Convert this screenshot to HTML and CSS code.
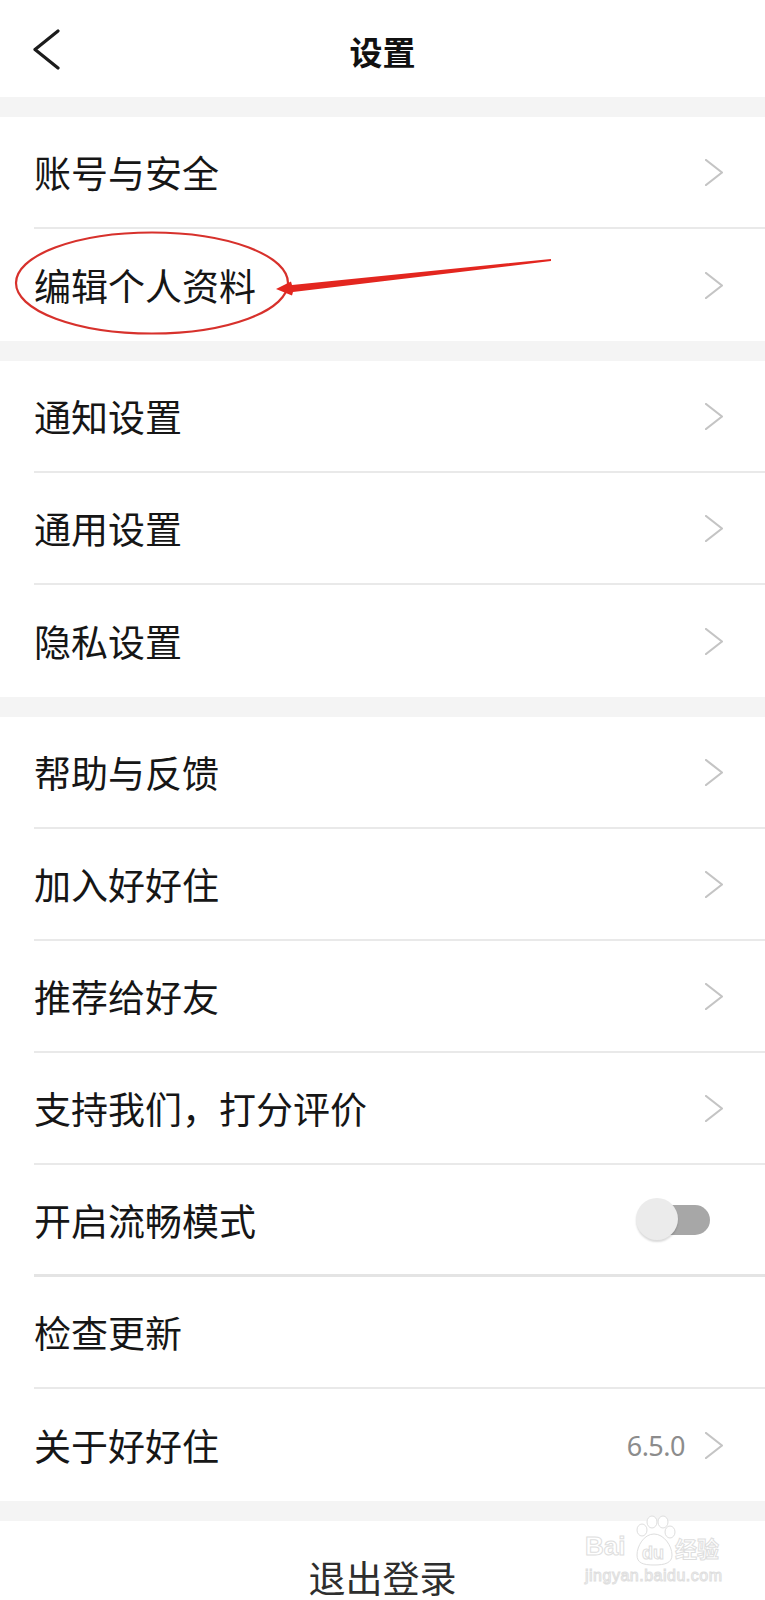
FILE: index.html
```html
<!DOCTYPE html>
<html lang="zh-CN">
<head>
  <meta charset="UTF-8">
  <meta name="viewport" content="width=device-width, initial-scale=1.0">
  <title>设置</title>
  <link rel="stylesheet" href="styles.css">
</head>
<body>
  <div class="page">
    <!-- top bar -->
    <header class="topbar">
      <a class="back" href="#">
        <svg width="28" height="41" viewBox="0 0 28 41"><polyline points="25,2 2,20.5 25,39" /></svg>
      </a>
      <h1>设置</h1>
      <span></span>
    </header>

    <section class="group">
      <div class="row"><span class="label">账号与安全</span><svg class="arrow" viewBox="0 0 18 27"><polyline points="1,1 17,13.5 1,26" /></svg></div>
      <div class="row"><span class="label">编辑个人资料</span><svg class="arrow" viewBox="0 0 18 27"><polyline points="1,1 17,13.5 1,26" /></svg></div>
    </section>

    <section class="group">
      <div class="row"><span class="label">通知设置</span><svg class="arrow" viewBox="0 0 18 27"><polyline points="1,1 17,13.5 1,26" /></svg></div>
      <div class="row"><span class="label">通用设置</span><svg class="arrow" viewBox="0 0 18 27"><polyline points="1,1 17,13.5 1,26" /></svg></div>
      <div class="row"><span class="label">隐私设置</span><svg class="arrow" viewBox="0 0 18 27"><polyline points="1,1 17,13.5 1,26" /></svg></div>
    </section>

    <section class="group">
      <div class="row"><span class="label">帮助与反馈</span><svg class="arrow" viewBox="0 0 18 27"><polyline points="1,1 17,13.5 1,26" /></svg></div>
      <div class="row"><span class="label">加入好好住</span><svg class="arrow" viewBox="0 0 18 27"><polyline points="1,1 17,13.5 1,26" /></svg></div>
      <div class="row"><span class="label">推荐给好友</span><svg class="arrow" viewBox="0 0 18 27"><polyline points="1,1 17,13.5 1,26" /></svg></div>
      <div class="row"><span class="label">支持我们，打分评价</span><svg class="arrow" viewBox="0 0 18 27"><polyline points="1,1 17,13.5 1,26" /></svg></div>
      <div class="row row-thick">
        <span class="label">开启流畅模式</span>
        <span class="switch"><span class="track"></span><span class="knob"></span></span>
      </div>
      <div class="row"><span class="label">检查更新</span></div>
      <div class="row">
        <span class="label">关于好好住</span>
        <span class="version">6.5.0</span>
        <svg class="arrow" viewBox="0 0 18 27"><polyline points="1,1 17,13.5 1,26" /></svg>
      </div>
    </section>

    <section class="group">
      <div class="logout">退出登录</div>
    </section>

    <!-- red hand-drawn annotation -->
    <svg class="annotation" width="765" height="1600" viewBox="0 0 765 1600">
      <ellipse cx="152" cy="283" rx="136" ry="50.5" />
      <polygon points="276,289 291,281.5 292,285 551,259 551,261 293,292 292,295.5" />
    </svg>

    <!-- watermark -->
    <svg class="watermark" width="150" height="80" viewBox="0 0 150 80">
      <text x="5" y="45" class="wm-big">Bai</text>
      <ellipse cx="62" cy="20" rx="5" ry="6" />
      <ellipse cx="72" cy="12" rx="5" ry="6" />
      <ellipse cx="83" cy="12" rx="5" ry="6" />
      <ellipse cx="90" cy="22" rx="5" ry="6" />
      <path d="M74 24 C64 24 57 36 57 45 C57 53 63 55 74 55 C85 55 92 53 92 45 C92 36 84 24 74 24 Z" />
      <text x="62" y="49" class="wm-du">du</text>
      <text x="95" y="47" class="wm-cn">经验</text>
      <text x="5" y="71" class="wm-url" textLength="137">jingyan.baidu.com</text>
    </svg>
  </div>
</body>
</html>
```

FILE: styles.css
```css
/* Reset */
* {
    margin: 0;
    padding: 0;
    box-sizing: border-box;
}

body {
    font-family: "Noto Sans CJK SC", "Noto Sans", sans-serif;
    background: #f4f4f4;
    color: #1a1a1a;
}

.page {
    position: relative;
    width: 765px;
    height: 1600px;
    overflow: hidden;
}

/* Top bar */
.topbar {
    height: 97px;
    background: #fff;
    display: grid;
    grid-template-columns: 1fr auto 1fr;
    align-items: center;
    padding-top: 4px;
}

.back {
    display: flex;
    padding-left: 33px;
    margin-top: -2px;
}

.back polyline {
    fill: none;
    stroke: #1c1c1c;
    stroke-width: 3.2;
    stroke-linecap: round;
    stroke-linejoin: round;
}

.topbar h1 {
    font-size: 33px;
    font-weight: 700;
    color: #111;
}

/* Groups */
.group {
    background: #fff;
    margin-top: 20px;
}

.row {
    height: 112px;
    margin-left: 34px;
    padding-right: 42px;
    display: flex;
    align-items: center;
    border-bottom: 2px solid #e9e9e9;
}

.row:last-child {
    border-bottom: none;
}

.row-thick {
    border-bottom: 3px solid #e4e4e4;
}

.label {
    flex: 1;
    font-size: 37px;
    color: #161616;
}

.arrow {
    width: 18px;
    height: 27px;
}

.arrow polyline {
    fill: none;
    stroke: #c4c4c4;
    stroke-width: 2.2;
    stroke-linecap: round;
    stroke-linejoin: round;
}

.version {
    font-family: "Noto Sans", sans-serif;
    font-size: 27px;
    letter-spacing: -0.5px;
    color: #8c8c8c;
    margin-right: 20px;
}

/* Toggle */
.switch {
    position: relative;
    width: 74px;
    height: 44px;
    margin-right: 13px;
}

.switch .track {
    position: absolute;
    left: 14px;
    right: 0;
    top: 7px;
    height: 30px;
    border-radius: 15px;
    background: #a7a7a7;
}

.switch .knob {
    position: absolute;
    left: 0;
    top: 0;
    width: 42px;
    height: 42px;
    border-radius: 50%;
    background: #ebebeb;
    box-shadow: 0 2px 2px rgba(0, 0, 0, 0.15);
}

/* Logout */
.logout {
    height: 112px;
    display: flex;
    align-items: center;
    justify-content: center;
    font-size: 37px;
    color: #2e2e2e;
}

/* Annotation overlay */
.annotation {
    position: absolute;
    left: 0;
    top: 0;
    pointer-events: none;
}

.annotation ellipse {
    fill: none;
    stroke: #d7312c;
    stroke-width: 2.2;
}

.annotation polygon {
    fill: #e3261f;
}

/* Watermark */
.watermark {
    position: absolute;
    left: 580px;
    top: 1510px;
    pointer-events: none;
}

.watermark text,
.watermark ellipse,
.watermark path {
    fill: #fff;
    stroke: #dedede;
    stroke-width: 1;
}

.wm-big {
    font-family: "Liberation Sans", sans-serif;
    font-size: 26px;
    font-weight: 700;
}

.wm-du {
    font-family: "Liberation Sans", sans-serif;
    font-size: 18px;
    font-weight: 700;
}

.wm-cn {
    font-family: "Noto Sans CJK SC", sans-serif;
    font-size: 22px;
    font-weight: 700;
}

.wm-url {
    font-family: "Liberation Sans", sans-serif;
    font-size: 16px;
}
```
